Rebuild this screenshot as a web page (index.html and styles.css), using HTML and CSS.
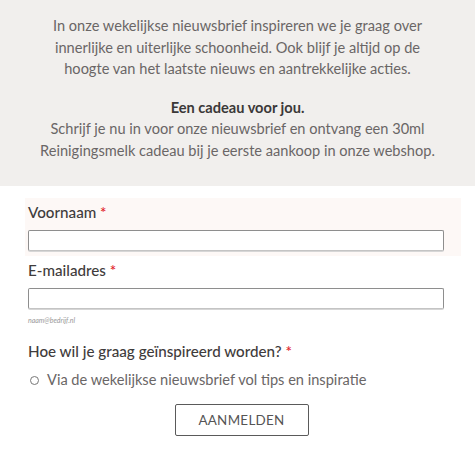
FILE: index.html
```html
<!DOCTYPE html>
<html lang="nl">
<head>
<meta charset="utf-8">
<title>Nieuwsbrief</title>
<link rel="stylesheet" href="styles.css">
</head>
<body>
<section class="intro">
  <p>In onze wekelijkse nieuwsbrief inspireren we je graag over<br>innerlijke en uiterlijke schoonheid. Ook blijf je altijd op de<br>hoogte van het laatste nieuws en aantrekkelijke acties.</p>
  <p><strong>Een cadeau voor jou.</strong><br>Schrijf je nu in voor onze nieuwsbrief en ontvang een 30ml<br>Reinigingsmelk cadeau bij je eerste aankoop in onze webshop.</p>
</section>
<form class="form">
  <div class="field field-active">
    <label class="label" for="vn">Voornaam <span class="req">*</span></label>
    <input class="input" id="vn" type="text">
  </div>
  <div class="field">
    <label class="label" for="em">E-mailadres <span class="req">*</span></label>
    <input class="input" id="em" type="email">
    <div class="hint">naam@bedrijf.nl</div>
  </div>
  <div class="field field-choice">
    <div class="label label-q">Hoe wil je graag geïnspireerd worden? <span class="req">*</span></div>
    <label class="option"><span class="radio"></span>Via de wekelijkse nieuwsbrief vol tips en inspiratie</label>
  </div>
  <div class="actions">
    <button class="btn" type="button">AANMELDEN</button>
  </div>
</form>
</body>
</html>
```
FILE: styles.css
```css
* { box-sizing: border-box; }
html, body { margin: 0; padding: 0; background: #fff; }
body {
  font-family: Lato, "Open Sans", sans-serif;
  color: #6a6666;
  width: 475px;
}
.intro {
  background: #f1efed;
  text-align: center;
  padding: 15px 0 25px;
  font-size: 14.6px;
  line-height: 21.5px;
}
.intro p { margin: 0; }
.intro p + p { margin-top: 17px; }
.intro strong { color: #3b3838; font-weight: 700; }
.form {
  padding: 12px 14px 0 25px;
}
.field { padding: 4px 17px 0 3px; }
.field-active { background: #fdf8f6; padding-bottom: 5px; }
.label {
  display: block;
  font-size: 15.2px;
  line-height: 20px;
  color: #3f3c3c;
  font-weight: 500;
  margin-bottom: 8px;
}
.req { color: #e2252b; }
.input {
  display: block;
  width: 100%;
  height: 21px;
  margin: 0;
  border: 1px solid #8e8e8e;
  border-bottom-color: #c4c4c4;
  box-shadow: 0 1px 0 #d6d6d6;
  border-radius: 2px;
  background: #fff;
}
.hint {
  font-size: 7px;
  font-style: italic;
  color: #9a9a9a;
  margin-top: 7px;
  line-height: 9px;
}
.field-choice { padding-top: 16px; }
.label-q { margin-bottom: 9px; }
.option {
  display: flex;
  align-items: center;
  font-size: 14.6px;
  line-height: 20px;
  color: #6a6666;
}
.radio {
  width: 9px;
  height: 9px;
  border: 1px solid #777;
  border-radius: 50%;
  margin: 0 8px 0 2px;
}
.actions {
  display: flex;
  justify-content: center;
  padding: 14px 0 0;
  margin-left: -25px;
  margin-right: -14px;
}
.btn {
  width: 134px;
  height: 32px;
  border: 1px solid #5a5a5a;
  border-radius: 2px;
  background: #fff;
  font-family: Lato, "Open Sans", sans-serif;
  font-size: 13.4px;
  color: #555;
  letter-spacing: 0.3px;
  margin-left: 8px;
}
```
